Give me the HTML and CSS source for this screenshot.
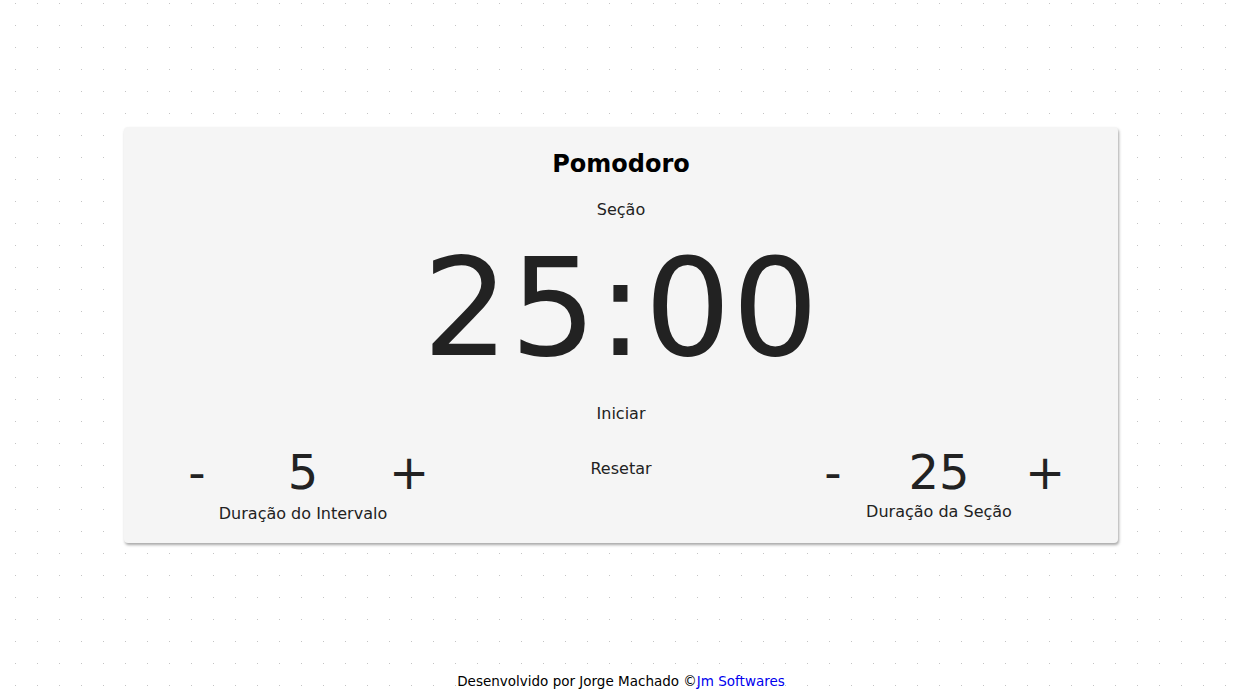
FILE: index.html
```html
<!DOCTYPE html>
<html lang="pt-BR">
<head>
<meta charset="utf-8">
<title>Pomodoro</title>
<link rel="stylesheet" href="styles.css">
</head>
<body>
<main class="card">
  <h1 class="title">Pomodoro</h1>
  <div class="mode">Seção</div>
  <div class="timer">25:00</div>
  <button class="action start">Iniciar</button>
  <div class="controls">
    <div class="group">
      <div class="stepper">
        <button class="step">-</button>
        <span class="value">5</span>
        <button class="step">+</button>
      </div>
      <div class="label">Duração do Intervalo</div>
    </div>
    <div class="middle">
      <button class="action reset">Resetar</button>
    </div>
    <div class="group group-right">
      <div class="stepper">
        <button class="step">-</button>
        <span class="value">25</span>
        <button class="step">+</button>
      </div>
      <div class="label">Duração da Seção</div>
    </div>
  </div>
</main>
<footer class="footer">Desenvolvido por Jorge Machado ©<a class="footer-link" href="#">Jm Softwares</a></footer>
</body>
</html>
```

FILE: styles.css
```css
html, body {
  margin: 0;
  padding: 0;
}
body {
  font-family: "DejaVu Sans", Verdana, sans-serif;
  color: #222;
  background-color: #fff;
  background-image: radial-gradient(circle at 15.5px 3.5px, #c4c4c4 0.6px, rgba(255,255,255,0) 1px);
  background-size: 22px 22px;
  min-height: 690px;
  display: flex;
  flex-direction: column;
  align-items: center;
}
.card {
  box-sizing: border-box;
  width: 994px;
  margin-top: 127px;
  padding: 23px 20px 0;
  height: 416px;
  background: #f5f5f5;
  border-radius: 4px;
  box-shadow: 1px 2px 3px rgba(0, 0, 0, 0.35);
  display: flex;
  flex-direction: column;
  align-items: center;
}
.title {
  margin: 0;
  font-size: 24px;
  line-height: 28px;
  font-weight: bold;
  color: #000;
}
.mode {
  margin-top: 22px;
  font-size: 16px;
  line-height: 19px;
}
.timer {
  margin-top: 10px;
  font-size: 136px;
  line-height: 158px;
  letter-spacing: 1px;
}
.action {
  font-family: inherit;
  font-size: 16px;
  line-height: 19px;
  color: #222;
  background: none;
  border: 0;
  padding: 0;
  cursor: pointer;
}
.start {
  margin-top: 17px;
}
.controls {
  margin-top: 21px;
  width: 100%;
  display: grid;
  grid-template-columns: 1fr 1fr 1fr;
}
.group {
  display: flex;
  flex-direction: column;
  align-items: center;
}
.stepper {
  width: 100%;
  display: grid;
  grid-template-columns: 1fr 1fr 1fr;
  align-items: center;
}
.step, .value {
  font-family: inherit;
  font-size: 48px;
  line-height: 56px;
  color: #222;
  text-align: center;
  background: none;
  border: 0;
  padding: 0;
}
.label {
  margin-top: 4px;
  font-size: 16px;
  line-height: 19px;
}
.group-right .label {
  margin-top: 2px;
}
.middle {
  display: flex;
  justify-content: center;
}
.reset {
  margin-top: 15px;
  height: 19px;
}
.footer {
  margin-top: auto;
  padding-bottom: 1px;
  font-size: 13.5px;
  line-height: 16px;
  color: #000;
}
.footer-link {
  color: #0000ee;
  text-decoration: none;
}
```
